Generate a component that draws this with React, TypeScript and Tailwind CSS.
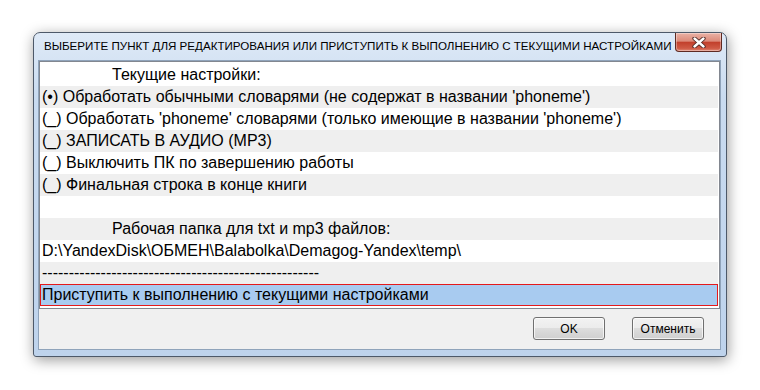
const rows: { text: string; indent?: boolean }[] = [
  { text: 'Текущие настройки:', indent: true },
  { text: "(•) Обработать обычными словарями (не содержат в названии 'phoneme')" },
  { text: "(_) Обработать 'phoneme' словарями (только имеющие в названии 'phoneme')" },
  { text: '(_) ЗАПИСАТЬ В АУДИО (MP3)' },
  { text: '(_) Выключить ПК по завершению работы' },
  { text: '(_) Финальная строка в конце книги' },
  { text: '' },
  { text: 'Рабочая папка для txt и mp3 файлов:', indent: true },
  { text: 'D:\\YandexDisk\\ОБМЕН\\Balabolka\\Demagog-Yandex\\temp\\' },
  { text: '----------------------------------------------------' },
];

const CloseButton = () => (
  <div className="flex h-[19px] w-[47px] items-center justify-center rounded-b-[4px] border border-t-0 border-[#5e2a22] bg-[linear-gradient(to_bottom,#eab2a6,#dc8a79_45%,#c2402c_52%,#cf5a45_85%,#e08a76)] shadow-[inset_0_0_0_1px_rgba(255,255,255,0.35)]">
    <svg width="14" height="11" viewBox="0 0 14 11">
      <path d="M2.5 1.5 L11.5 9.5 M11.5 1.5 L2.5 9.5" stroke="#4b2520" strokeWidth="4.2" strokeLinecap="round" />
      <path d="M2.5 1.5 L11.5 9.5 M11.5 1.5 L2.5 9.5" stroke="#ffffff" strokeWidth="2.4" strokeLinecap="round" />
    </svg>
  </div>
);

const Button = ({ label }: { label: string }) => (
  <button className="flex h-[23px] w-[72px] items-center justify-center rounded-[3px] border border-[#707070] bg-[linear-gradient(to_bottom,#f2f2f2,#ebebeb_50%,#dddddd_50%,#cfcfcf)] text-[12px] text-black shadow-[inset_0_0_0_1px_rgba(255,255,255,0.7)]">
    {label}
  </button>
);

export default function App() {
  return (
    <div className="h-[390px] w-[760px] bg-white pl-[33px] pt-[32px] font-['Liberation_Sans',sans-serif]">
      <div className="flex h-[325px] w-[694px] flex-col rounded-t-[7px] rounded-b-[3px] border border-[#4d5969] bg-[linear-gradient(to_bottom,#dfeaf7,#c9dbf0_20%,#bed3ec)] px-[4px] pb-[6px] shadow-[1px_3px_14px_rgba(0,0,0,0.4)]">
        <div className="flex h-[27px] items-start justify-between">
          <div className="whitespace-nowrap pl-[6px] pt-[6px] text-[11.6px] leading-[14px] text-black">
            ВЫБЕРИТЕ ПУНКТ ДЛЯ РЕДАКТИРОВАНИЯ ИЛИ ПРИСТУПИТЬ К ВЫПОЛНЕНИЮ С ТЕКУЩИМИ НАСТРОЙКАМИ
          </div>
          <CloseButton />
        </div>

        <div className="mr-[1px] flex flex-1 flex-col border border-[#8fa3ba] bg-[#f0f0f0]">
          <div className="flex h-[248px] flex-col border border-[#828790] bg-white py-[2px] pr-[1px] text-[16px] leading-[22px] text-black">
            {rows.map((r, i) => (
              <div
                key={i}
                className={`h-[22px] whitespace-pre ${i % 2 === 1 ? 'bg-[#efefef]' : 'bg-white'} ${r.indent ? 'pl-[72px]' : 'pl-[2px]'}`}
              >
                {r.text}
              </div>
            ))}
            <div className="h-[22px] whitespace-pre border border-[#e5191b] bg-[#a8cbf0] pl-[1px] leading-[20px]">
              Приступить к выполнению с текущими настройками
            </div>
          </div>

          <div className="flex flex-1 items-start justify-end gap-[27px] pr-[16px] pt-[8px]">
            <Button label="OK" />
            <Button label="Отменить" />
          </div>
        </div>
      </div>
    </div>
  );
}
